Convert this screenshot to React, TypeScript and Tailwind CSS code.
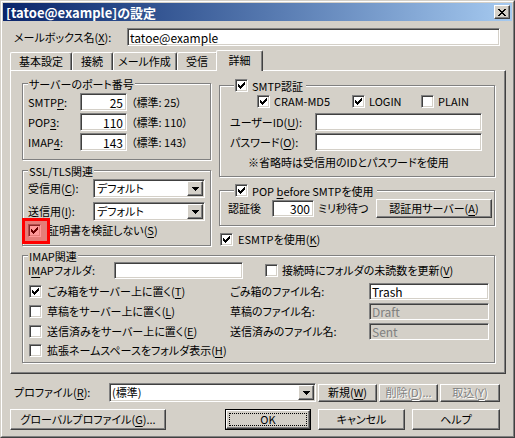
import React from "react";

const U = ({ children }: { children: React.ReactNode }) => (
  <span className="underline decoration-1 underline-offset-[2px]">{children}</span>
);

const sunken =
  "border border-t-[#808080] border-l-[#808080] border-b-white border-r-white shadow-[inset_1px_1px_0_#404040,inset_-1px_-1px_0_#d4d0c8]";
const raised =
  "border border-t-white border-l-white border-b-[#404040] border-r-[#404040] shadow-[inset_-1px_-1px_0_#808080]";
const disabledText = "text-[#808080] [text-shadow:1px_1px_0_#fff]";

function Check({ checked = false }: { checked?: boolean }) {
  return (
    <span className={`relative block w-[13px] h-[13px] shrink-0 bg-white ${sunken}`}>
      {checked && (
        <svg
          className="absolute left-[2px] top-[2px]"
          width="7"
          height="7"
          viewBox="0 0 7 7"
          shapeRendering="crispEdges"
        >
          {[2, 3, 4, 3, 2, 1, 0].map((y, i) => (
            <rect key={i} x={i} y={y} width="1" height="3" fill="#000" />
          ))}
        </svg>
      )}
    </span>
  );
}

function Arrow() {
  return (
    <svg width="7" height="4" viewBox="0 0 7 4" shapeRendering="crispEdges">
      <rect x="0" y="0" width="7" height="1" fill="#000" />
      <rect x="1" y="1" width="5" height="1" fill="#000" />
      <rect x="2" y="2" width="3" height="1" fill="#000" />
      <rect x="3" y="3" width="1" height="1" fill="#000" />
    </svg>
  );
}

function CloseGlyph() {
  const rows = [
    [0, 1, 6, 7],
    [1, 2, 5, 6],
    [2, 3, 4, 5],
    [3, 4],
    [2, 3, 4, 5],
    [1, 2, 5, 6],
    [0, 1, 6, 7],
  ];
  return (
    <svg width="8" height="7" viewBox="0 0 8 7" shapeRendering="crispEdges">
      {rows.map((r, y) =>
        r.map((x) => <rect key={`${x}-${y}`} x={x} y={y} width="1" height="1" fill="#000" />)
      )}
    </svg>
  );
}

function Group({
  title,
  className = "",
  titleClass = "left-[5px]",
  children,
}: {
  title: React.ReactNode;
  className?: string;
  titleClass?: string;
  children?: React.ReactNode;
}) {
  return (
    <div
      className={`relative border border-[#808080] shadow-[inset_1px_1px_0_#fff,1px_1px_0_#fff] ${className}`}
    >
      <div
        className={`absolute top-[-7px] ${titleClass} bg-[#d4d0c8] px-[1px] h-[13px] leading-[12px] flex items-center gap-[4px] whitespace-nowrap`}
      >
        {title}
      </div>
      {children}
    </div>
  );
}

function Combo({ w, text, valueClass = "" }: { w: string; text: string; valueClass?: string }) {
  return (
    <div className={`${w} h-[19px] bg-white ${sunken} p-[1px] flex items-stretch`}>
      <span className={`flex-1 flex items-center pl-[2px] ${valueClass}`}>{text}</span>
      <div className={`w-[16px] bg-[#d4d0c8] ${raised} flex items-center justify-center`}>
        <Arrow />
      </div>
    </div>
  );
}

export default function App() {
  return (
    <div className="w-[515px] h-[438px] overflow-hidden bg-[#d4d0c8] font-['Noto_Sans_CJK_JP',sans-serif] text-[11px] leading-[13px] text-black [font-feature-settings:'palt']">
      <div className="w-full h-full border border-t-[#d4d0c8] border-l-[#d4d0c8] border-b-[#404040] border-r-[#404040]">
        <div className="w-full h-full border border-t-white border-l-white border-b-[#808080] border-r-[#808080] p-[1px] flex flex-col">
          {/* Title bar */}
          <div className="h-[18px] shrink-0 bg-gradient-to-r from-[#0a246a] to-[#a6caf0] flex items-center pl-[3px] pr-[2px]">
            <span className="text-white font-bold text-[13px] leading-[15px] whitespace-nowrap">
              [tatoe@example]の設定
            </span>
            <div className={`ml-auto w-[16px] h-[14px] bg-[#d4d0c8] ${raised} flex items-center justify-center`}>
              <CloseGlyph />
            </div>
          </div>

          {/* Mailbox name row */}
          <div className="mt-[7px] h-[18px] flex items-center pl-[11px]">
            <span className="w-[113px] whitespace-nowrap">
              メールボックス名(<U>X</U>):
            </span>
            <div className={`w-[373px] h-[18px] bg-white ${sunken} flex items-center px-[2px] text-[12px]`}>
              tatoe@example
            </div>
          </div>

          {/* Tabs */}
          <div className="mt-[4px] h-[20px] ml-[7px] flex items-end relative z-10">
            <div className="w-[62px] h-[18px] border-t border-l border-r border-t-white border-l-white border-r-[#404040] shadow-[inset_-1px_0_0_#808080] rounded-t-[2px] flex items-center justify-center">
              基本設定
            </div>
            <div className="w-[41px] h-[18px] border-t border-r border-t-white border-r-[#404040] shadow-[inset_-1px_0_0_#808080,inset_1px_0_0_#fff] rounded-t-[2px] flex items-center justify-center">
              接続
            </div>
            <div className="w-[64px] h-[18px] border-t border-r border-t-white border-r-[#404040] shadow-[inset_-1px_0_0_#808080,inset_1px_0_0_#fff] rounded-t-[2px] flex items-center justify-center">
              メール作成
            </div>
            <div className="w-[41px] h-[18px] border-t border-r border-t-white border-r-[#404040] shadow-[inset_-1px_0_0_#808080,inset_1px_0_0_#fff] rounded-t-[2px] flex items-center justify-center">
              受信
            </div>
            <div className="-ml-[2px] -mb-[1px] w-[47px] h-[21px] bg-[#d4d0c8] border-t border-l border-r border-t-white border-l-white border-r-[#404040] shadow-[inset_-1px_0_0_#808080] rounded-t-[2px] flex items-start justify-center pt-[3px]">
              詳細
            </div>
          </div>

          {/* Panel */}
          <div className="ml-[7px] w-[496px] h-[304px] shrink-0 border border-t-white border-l-white border-b-[#404040] border-r-[#404040] shadow-[inset_-1px_-1px_0_#808080]">
            <div className="flex pl-[11px] pt-[12px]">
              {/* Left column */}
              <div className="w-[189px] flex flex-col">
                <Group title="サーバーのポート番号" className="h-[77px]">
                  <div className="pt-[9px] pl-[5px] flex flex-col gap-[2px]">
                    {[
                      ["SMTP", "P", "25"],
                      ["POP", "3", "110"],
                      ["IMAP", "4", "143"],
                    ].map(([a, u, v]) => (
                      <div key={a} className="h-[18px] flex items-center">
                        <span className="w-[52px]">
                          {a}
                          <U>{u}</U>:
                        </span>
                        <div className={`w-[47px] h-[18px] bg-white ${sunken} flex items-center justify-end pr-[3px] text-[12px]`}>
                          {v}
                        </div>
                        <span className="ml-[4px] whitespace-nowrap">（標準: {v}）</span>
                      </div>
                    ))}
                  </div>
                </Group>

                <Group title="SSL/TLS関連" className="mt-[10px] h-[76px]">
                  <div className="pt-[8px] pl-[5px] flex flex-col">
                    <div className="h-[19px] flex items-center">
                      <span className="w-[65px] whitespace-nowrap">
                        受信用(<U>C</U>):
                      </span>
                      <Combo w="w-[112px]" text="デフォルト" />
                    </div>
                    <div className="mt-[4px] h-[19px] flex items-center">
                      <span className="w-[65px] whitespace-nowrap">
                        送信用(<U>I</U>):
                      </span>
                      <Combo w="w-[112px]" text="デフォルト" />
                    </div>
                    <div className="mt-[3px] h-[13px] flex items-center">
                      <span className="relative">
                        <Check checked />
                        <span className="absolute left-[-6px] top-[-6px] w-[28px] h-[26px] border-[3px] border-[#ff0000] bg-[rgba(255,0,0,0.4)]" />
                      </span>
                      <span className="ml-[7px] whitespace-nowrap">
                        証明書を検証しない(<U>S</U>)
                      </span>
                    </div>
                  </div>
                </Group>
              </div>

              {/* Right column */}
              <div className="ml-[8px] mt-[2px] w-[276px] flex flex-col">
                <Group
                  className="h-[92px]"
                  titleClass="left-[14px]"
                  title={
                    <>
                      <Check checked />
                      <span className="pr-[2px]">SMTP認証</span>
                    </>
                  }
                >
                  <div className="pt-[9px] flex flex-col">
                    <div className="h-[13px] flex items-center pl-[37px]">
                      <div className="w-[95px] flex items-center">
                        <Check checked />
                        <span className="ml-[4px]">CRAM-MD5</span>
                      </div>
                      <div className="w-[69px] flex items-center">
                        <Check checked />
                        <span className="ml-[4px]">LOGIN</span>
                      </div>
                      <div className="flex items-center">
                        <Check />
                        <span className="ml-[4px]">PLAIN</span>
                      </div>
                    </div>
                    <div className="mt-[5px] h-[18px] flex items-center pl-[10px]">
                      <span className="w-[85px] whitespace-nowrap">
                        ユーザーID(<U>U</U>):
                      </span>
                      <div className={`w-[167px] h-[18px] bg-white ${sunken}`} />
                    </div>
                    <div className="mt-[2px] h-[18px] flex items-center pl-[10px]">
                      <span className="w-[85px] whitespace-nowrap">
                        パスワード(<U>O</U>):
                      </span>
                      <div className={`w-[167px] h-[18px] bg-white ${sunken}`} />
                    </div>
                    <div className="mt-[4px] h-[14px] flex items-center pl-[28px] whitespace-nowrap">
                      ※省略時は受信用のIDとパスワードを使用
                    </div>
                  </div>
                </Group>

                <Group
                  className="mt-[13px] h-[36px]"
                  titleClass="left-[14px]"
                  title={
                    <>
                      <Check checked />
                      <span className="pr-[2px]">
                        POP <U>b</U>efore SMTPを使用
                      </span>
                    </>
                  }
                >
                  <div className="pt-[8px] pl-[8px] h-[19px] box-content flex items-center">
                    <span className="w-[44px]">認証後</span>
                    <div className={`w-[42px] h-[17px] bg-white ${sunken} flex items-center justify-end pr-[3px] text-[12px]`}>
                      300
                    </div>
                    <span className="ml-[4px] w-[58px] whitespace-nowrap">ミリ秒待つ</span>
                    <div className={`w-[116px] h-[19px] bg-[#d4d0c8] ${raised} flex items-center justify-center whitespace-nowrap`}>
                      認証用サーバー(<U>A</U>)
                    </div>
                  </div>
                </Group>

                <div className="mt-[7px] h-[13px] flex items-center ml-[1px]">
                  <Check checked />
                  <span className="ml-[5px] whitespace-nowrap">
                    ESMTPを使用(<U>K</U>)
                  </span>
                </div>
              </div>
            </div>

            {/* IMAP group */}
            <Group title="IMAP関連" className="ml-[11px] mt-[9px] w-[473px] h-[108px]">
              <div className="pt-[6px] flex flex-col">
                <div className="h-[17px] flex items-center pl-[5px]">
                  <span className="w-[86px] whitespace-nowrap">
                    I<U>M</U>APフォルダ:
                  </span>
                  <div className={`w-[129px] h-[17px] bg-white ${sunken}`} />
                  <div className="ml-[22px] flex items-center">
                    <Check />
                    <span className="ml-[4px] whitespace-nowrap">
                      接続時にフォルダの未読数を更新(<U>V</U>)
                    </span>
                  </div>
                </div>

                <div className="mt-[3px] h-[18px] flex items-center pl-[6px]">
                  <div className="w-[201px] flex items-center">
                    <Check checked />
                    <span className="ml-[5px] whitespace-nowrap">
                      ごみ箱をサーバー上に置く(<U>T</U>)
                    </span>
                  </div>
                  <span className="w-[139px] whitespace-nowrap">ごみ箱のファイル名:</span>
                  <div className={`w-[120px] h-[17px] bg-white ${sunken} flex items-center pl-[2px] text-[12px]`}>
                    Trash
                  </div>
                </div>

                <div className="mt-[2px] h-[18px] flex items-center pl-[6px]">
                  <div className="w-[201px] flex items-center">
                    <Check />
                    <span className="ml-[5px] whitespace-nowrap">
                      草稿をサーバー上に置く(<U>L</U>)
                    </span>
                  </div>
                  <span className="w-[139px] whitespace-nowrap">草稿のファイル名:</span>
                  <div className={`w-[120px] h-[17px] bg-[#d4d0c8] ${sunken} flex items-center pl-[2px] text-[12px] text-[#808080]`}>
                    Draft
                  </div>
                </div>

                <div className="mt-[2px] h-[18px] flex items-center pl-[6px]">
                  <div className="w-[201px] flex items-center">
                    <Check />
                    <span className="ml-[5px] whitespace-nowrap">
                      送信済みをサーバー上に置く(<U>E</U>)
                    </span>
                  </div>
                  <span className="w-[139px] whitespace-nowrap">送信済みのファイル名:</span>
                  <div className={`w-[120px] h-[17px] bg-[#d4d0c8] ${sunken} flex items-center pl-[2px] text-[12px] text-[#808080]`}>
                    Sent
                  </div>
                </div>

                <div className="mt-[2px] h-[16px] flex items-center pl-[6px]">
                  <Check />
                  <span className="ml-[5px] whitespace-nowrap">
                    拡張ネームスペースをフォルダ表示(<U>H</U>)
                  </span>
                </div>
              </div>
            </Group>
          </div>

          {/* Profile row */}
          <div className="mt-[9px] h-[19px] flex items-center pl-[11px]">
            <span className="w-[95px] whitespace-nowrap">
              プロファイル(<U>R</U>):
            </span>
            <Combo w="w-[207px]" text="(標準)" valueClass="!pl-[1px]" />
            <div className={`ml-[2px] w-[59px] h-[18px] ${raised} flex items-center justify-center whitespace-nowrap`}>
              新規(<U>W</U>)
            </div>
            <div className={`ml-[2px] w-[59px] h-[18px] ${raised} flex items-center justify-center whitespace-nowrap ${disabledText}`}>
              削除(<U>D</U>)...
            </div>
            <div className={`ml-[2px] w-[60px] h-[18px] ${raised} flex items-center justify-center whitespace-nowrap ${disabledText}`}>
              取込(<U>Y</U>)
            </div>
          </div>

          {/* Buttons row */}
          <div className="mt-[7px] h-[21px] flex items-center">
            <div className={`ml-[7px] w-[156px] h-[21px] ${raised} flex items-center justify-center whitespace-nowrap`}>
              グローバルプロファイル(<U>G</U>)...
            </div>
            <div className="ml-[59px] w-[86px] h-[21px] border border-black flex">
              <div className={`flex-1 ${raised} p-[2px] flex`}>
                <div className="flex-1 border border-dotted border-black flex items-center justify-center">
                  OK
                </div>
              </div>
            </div>
            <div className={`ml-[7px] w-[87px] h-[21px] ${raised} flex items-center justify-center`}>
              キャンセル
            </div>
            <div className={`ml-[7px] w-[88px] h-[21px] ${raised} flex items-center justify-center`}>
              ヘルプ
            </div>
          </div>
        </div>
      </div>
    </div>
  );
}
